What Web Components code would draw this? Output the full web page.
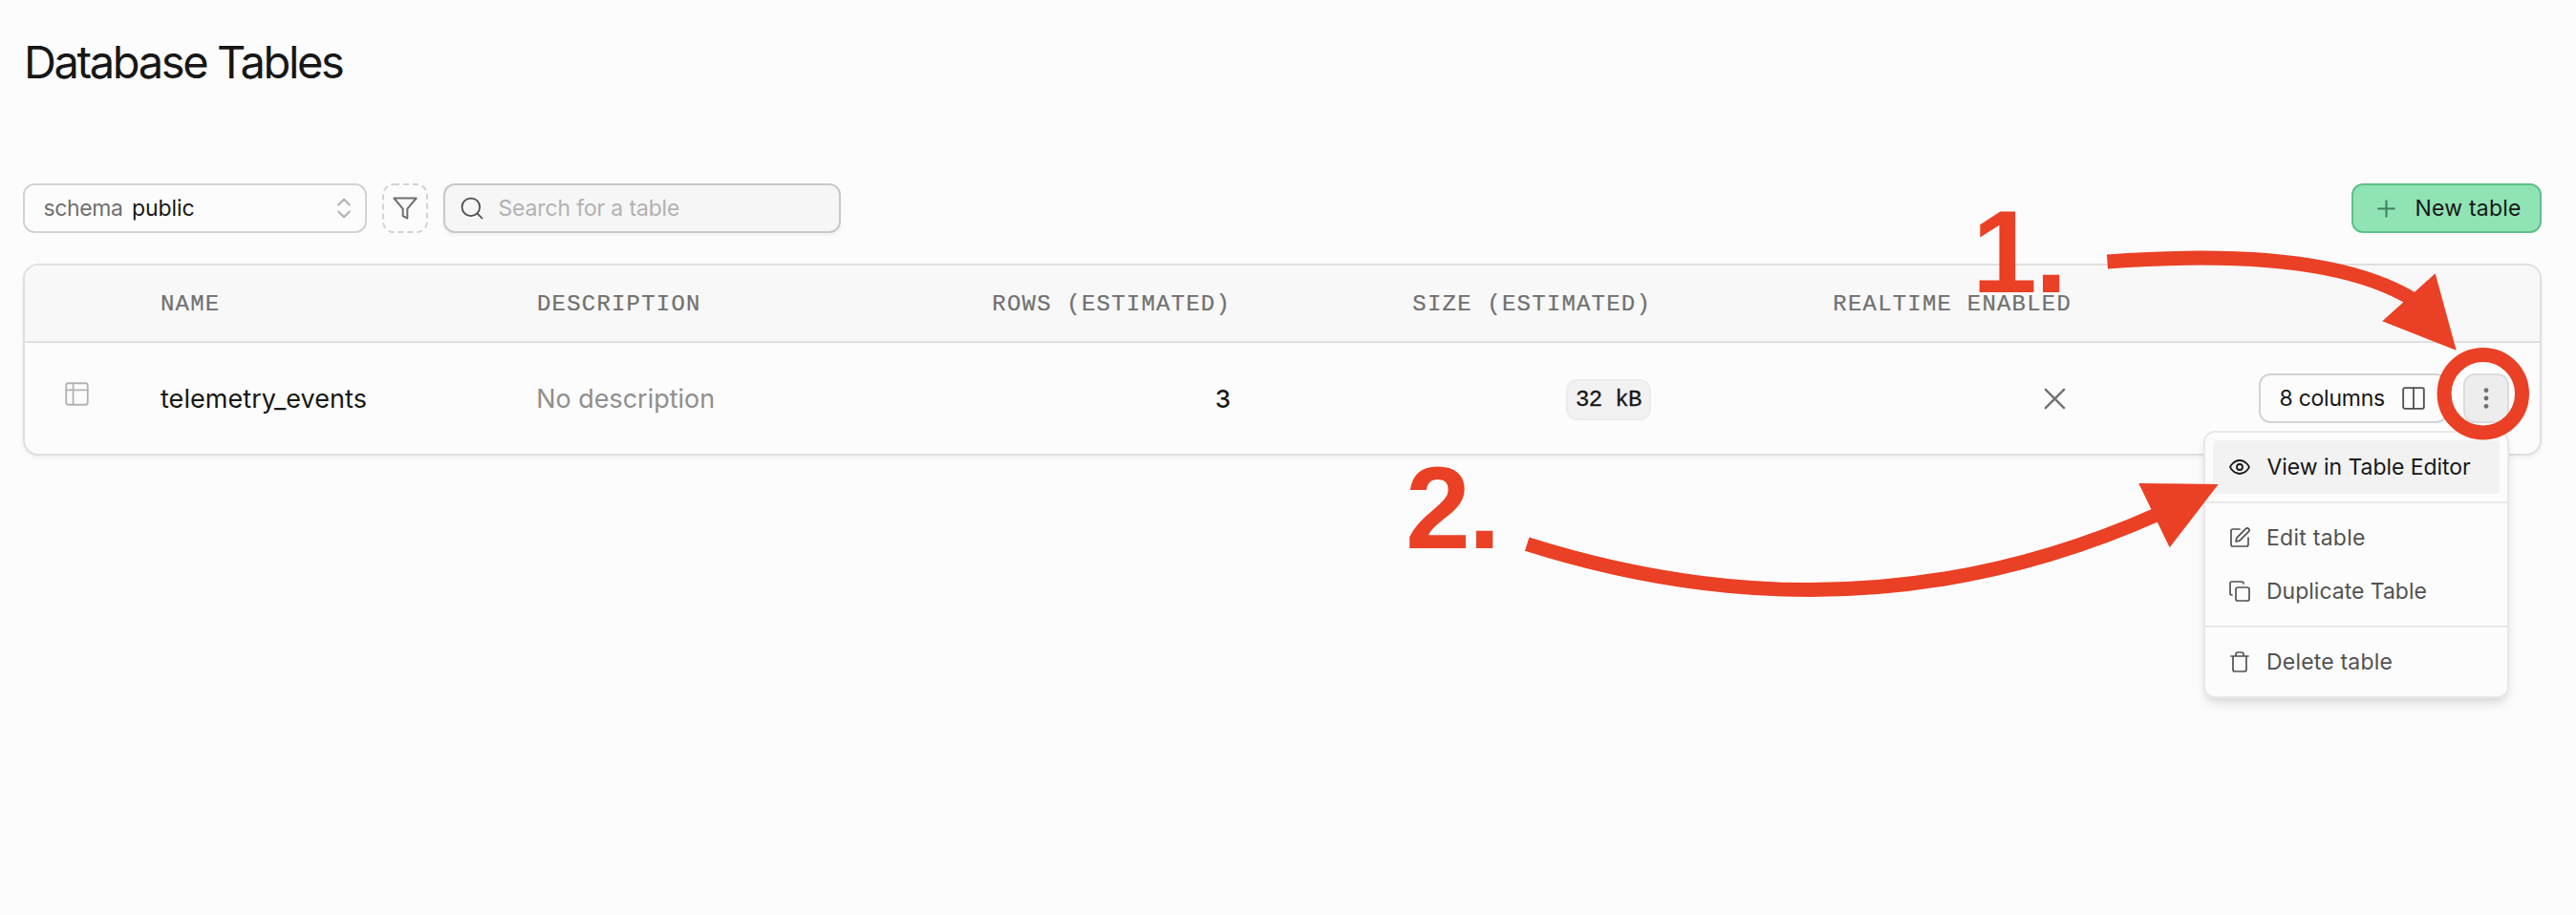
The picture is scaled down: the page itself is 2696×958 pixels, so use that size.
<!DOCTYPE html>
<html lang="en">
<head>
<meta charset="utf-8">
<title>Database Tables</title>
<style>
  body { margin: 0; background: #fcfcfc; }
</style>
</head>
<body>
<tables-page></tables-page>
<script>
const SANS = '"Inter", "Lato", sans-serif';
const MONO = '"Liberation Mono", monospace';
const ICONS = {
  chevrons: '<path d="m7 15 5 5 5-5M7 9l5-5 5 5"/>',
  filter: '<path d="M22 3H2l8 9.46V19l4 2v-8.54L22 3z"/>',
  search: '<circle cx="11" cy="11" r="8"/><path d="m21 21-4.35-4.35"/>',
  plus: '<path d="M4 12h16M12 4v16"/>',
  table: '<rect x="2" y="2" width="20" height="20" rx="2"/><path d="M8.5 2v20M2 8.4h20"/>',
  columns: '<rect x="2" y="2" width="20" height="20" rx="1.6"/><path d="M12 2v20"/>',
  x: '<path d="M4 4l16 16M20 4L4 20"/>',
  dots: '<g fill="currentColor" stroke="none"><circle cx="12" cy="3.7" r="2.4"/><circle cx="12" cy="12" r="2.4"/><circle cx="12" cy="20.3" r="2.4"/></g>',
  eye: '<path d="M2 12s3.2-7 10-7 10 7 10 7-3.2 7-10 7S2 12 2 12z"/><circle cx="12" cy="12" r="3"/>',
  edit: '<path d="M12 3H5a2 2 0 0 0-2 2v14a2 2 0 0 0 2 2h14a2 2 0 0 0 2-2v-7"/><path d="M18.375 2.625a1 1 0 0 1 3 3l-9.013 9.014a2 2 0 0 1-.853.505l-2.873.84a.5.5 0 0 1-.62-.62l.84-2.873a2 2 0 0 1 .506-.852z"/>',
  copy: '<rect x="8" y="8" width="14" height="14" rx="2"/><path d="M4 16c-1.1 0-2-.9-2-2V4c0-1.1.9-2 2-2h10c1.1 0 2 .9 2 2"/>',
  trash: '<path d="M3 6h18M19 6v14a2 2 0 0 1-2 2H7a2 2 0 0 1-2-2V6M8 6V4a2 2 0 0 1 2-2h4a2 2 0 0 1 2 2v2"/>'
};

function define(name, html, setup) {
  const t = document.createElement('template');
  t.innerHTML = html;
  customElements.define(name, class extends HTMLElement {
    connectedCallback() {
      if (this.shadowRoot) return;
      this.attachShadow({ mode: 'open' }).append(t.content.cloneNode(true));
      if (setup) setup(this, this.shadowRoot);
    }
  });
}

define('ui-icon', `<style>
  :host { display: block; flex: none; }
  svg { display: block; fill: none; stroke: currentColor; stroke-linecap: round; stroke-linejoin: round; }
</style><svg viewBox="0 0 24 24" overflow="visible"></svg>`, (el, root) => {
  const svg = root.querySelector('svg');
  const size = el.getAttribute('size') || 24;
  svg.setAttribute('width', size);
  svg.setAttribute('height', size);
  svg.setAttribute('stroke-width', el.getAttribute('stroke') || 1.5);
  svg.innerHTML = ICONS[el.getAttribute('name')];
});

/* A label whose tracking is set so its ink is as wide as the "ink" attribute. */
define('ui-label', `<style>
  :host { display: block; white-space: pre; flex: none; padding-top: 2px; }
</style><slot></slot>`, (el) => {
  const size = +el.getAttribute('size') || 23;
  const weight = el.getAttribute('weight') || 400;
  const text = el.textContent;
  el.style.font = `${weight} ${size}px/1.2 ${SANS}`;
  const ink = +el.getAttribute('ink');
  const ctx = document.createElement('canvas').getContext('2d');
  ctx.font = `${weight} ${size}px ${SANS}`;
  const m = ctx.measureText(text);
  el.style.marginLeft = m.actualBoundingBoxLeft + 'px';
  if (ink && text.length > 1) {
    const gap = (ink - m.actualBoundingBoxRight - m.actualBoundingBoxLeft) / (text.length - 1);
    el.style.letterSpacing = gap.toFixed(3) + 'px';
    el.style.marginRight = (-gap).toFixed(3) + 'px';
  }
});

define('schema-select', `<style>
  :host { display: flex; box-sizing: border-box; width: 360px; height: 52px; align-items: center;
    border: 2px solid #d3d3d3; border-radius: 12px; padding: 0 8px 0 20.5px; }
  .key { color: #707070; } .val { color: #171717; margin-left: 10px; }
  ui-icon { margin-left: auto; color: #b2b2b2; }
</style><ui-label class="key" ink="81.5">schema</ui-label><span class="val"><ui-label ink="64.5">public</ui-label></span>
<ui-icon name="chevrons" size="28" stroke="1.8"></ui-icon>`);

define('filter-button', `<style>
  :host { display: flex; width: 48px; height: 52px; align-items: center; justify-content: center; color: #707070; }
  svg { grid-area: 1/1; } div { display: grid; place-items: center; }
</style><div><svg width="48" height="52" fill="none"><rect x="1" y="1" width="46" height="50" rx="11" stroke="#d3d3d3" stroke-width="2" stroke-dasharray="6 4"/></svg>
<ui-icon name="filter" size="28" stroke="1.7" style="grid-area:1/1"></ui-icon></div>`);

define('search-box', `<style>
  :host { display: flex; box-sizing: border-box; width: 416px; height: 52px; align-items: center; gap: 14.5px;
    background: #f6f6f6; border: 2px solid #c8c8c8; border-radius: 12px; padding-left: 14px;
    box-shadow: 0 2px 4px rgba(0,0,0,.05); color: #4c4c4c; }
  ui-label { color: #b2b2b2; }
</style><ui-icon name="search" size="28"></ui-icon><ui-label ink="188.5">Search for a table</ui-label>`);

define('new-button', `<style>
  :host { display: flex; box-sizing: border-box; width: 199px; height: 52px; align-items: center;
    background: #90e3b4; border: 2px solid #5fc088; border-radius: 12px; padding-left: 21.5px; gap: 20px; color: #171717; }
  ui-icon { color: #3f7f5c; }
</style><ui-icon name="plus" size="25" stroke="1.9"></ui-icon><ui-label ink="108.5">New table</ui-label>`);

define('tool-bar', `<style>
  :host { display: flex; gap: 16px; height: 52px; }
  new-button { margin-left: auto; }
</style><schema-select></schema-select><filter-button></filter-button><search-box></search-box><new-button></new-button>`);

define('size-badge', `<style>
  :host { display: flex; box-sizing: border-box; width: 89px; height: 43px; margin-top: 3px; align-items: center; justify-content: center;
    background: #f2f2f2; border: 2px solid #ececec; border-radius: 12px; color: #171717; padding-top: 1px;
    font: 400 24px/38px ${MONO}; letter-spacing: -.65px; white-space: pre; -webkit-text-stroke: .3px; }
</style><slot></slot>`);

define('columns-button', `<style>
  :host { display: flex; box-sizing: border-box; width: 198px; height: 52px; align-items: center; justify-content: space-between;
    border: 2px solid #d3d3d3; border-radius: 12px; padding: 0 21.3px 0 20.5px; color: #171717; }
  ui-icon { color: #525252; }
</style><ui-label ink="108.5">8 columns</ui-label><ui-icon name="columns" size="26" stroke="1.7"></ui-icon>`);

define('more-button', `<style>
  :host { display: flex; box-sizing: border-box; width: 48px; height: 52px; align-items: center; justify-content: center;
    background: #ededed; border: 2px solid #dcdcdc; border-radius: 12px; color: #707070; }
</style><ui-icon name="dots" size="24"></ui-icon>`);

define('tables-grid', `<style>
  :host { display: block; box-sizing: border-box; height: 201px; border: 2px solid #dfdfdf; border-radius: 16px;
    box-shadow: 0 2px 4px rgba(0,0,0,.06); overflow: hidden; background: #fcfcfc; }
  .row { display: grid; grid-template-columns: 142px 394px 286px 440px 440px 440px 1fr; align-items: center; height: 116px; }
  .head { box-sizing: border-box; height: 81px; padding-top: 2px; background: #f8f8f8; border-bottom: 2px solid #dfdfdf; color: #707070;
    font: 400 24px/30px ${MONO}; letter-spacing: 1.2px; white-space: pre; -webkit-text-stroke: .2px; }
  .r { justify-self: end; }
</style>
<div class="row head"><span></span><span>NAME</span><span>DESCRIPTION</span><span class="r">ROWS (ESTIMATED)</span><span class="r">SIZE (ESTIMATED)</span><span class="r">REALTIME ENABLED</span></div>
<div class="row">
  <ui-icon name="table" size="27" stroke="1.6" style="margin:0 0 10px 41.3px;color:#b2b2b2"></ui-icon>
  <ui-label size="27" ink="214.7" style="color:#171717">telemetry_events</ui-label>
  <div style="padding-left:1.2px"><ui-label size="27" ink="183" style="color:#8f8f8f">No description</ui-label></div>
  <ui-label class="r" size="26" weight="500" style="color:#171717">3</ui-label>
  <size-badge class="r">32 kB</size-badge>
  <ui-icon class="r" name="x" size="29" stroke="1.9" style="padding-right:3.5px;color:#707070"></ui-icon>
  <div class="r" style="display:flex;gap:16px;margin-right:32px"><columns-button></columns-button><more-button></more-button></div>
</div>`);

define('row-menu', `<style>
  :host { display: block; box-sizing: border-box; width: 320px; padding: 8px 0; background: #fcfcfc;
    border: 2px solid #e8e8e8; border-radius: 12px;
    box-shadow: 0 8px 12px -2px rgba(0,0,0,.1), 0 4px 8px -4px rgba(0,0,0,.1); }
  .item { display: flex; height: 56px; margin: 0 8px; padding-left: 16px; align-items: center; gap: 18px; color: #525252; }
  .active { background: #f2f2f2; border-radius: 4px; color: #171717; gap: 16.5px; }
  hr { height: 2px; margin: 8px 0; border: 0; background: #e8e8e8; }
</style>
<div class="item active"><ui-icon name="eye" stroke="1.8"></ui-icon><ui-label ink="213.5">View in Table Editor</ui-label></div>
<hr>
<div class="item"><ui-icon name="edit" stroke="1.7"></ui-icon><ui-label ink="101">Edit table</ui-label></div>
<div class="item"><ui-icon name="copy" stroke="1.7"></ui-icon><ui-label ink="165.5">Duplicate Table</ui-label></div>
<hr>
<div class="item"><ui-icon name="trash" stroke="1.7"></ui-icon><ui-label ink="129.5">Delete table</ui-label></div>`);

define('page-notes', `<style>
  :host { display: block; } svg { display: block; }
  text { font: 700 122px "Liberation Sans", Arial, sans-serif; }
</style><svg width="2696" height="958" fill="#ea4025">
  <g fill="none" stroke="#ea4025" stroke-width="15">
    <path d="M2205.5 274Q2433.5 256.9 2526 314"/>
    <path d="M1598.2 569.7Q1943 679 2258 538.5"/>
    <circle cx="2598.8" cy="412.2" r="40.7"/>
  </g>
  <path d="M2548.7 286.3L2493.3 336.3L2570.7 366.7Z"/>
  <path d="M2238.3 506L2270.7 573.3L2321.7 507Z"/>
  <text x="2064" y="306" letter-spacing="-2">1.</text>
  <text x="1471" y="573.7" letter-spacing="-2">2.</text>
</svg>`);

define('tables-page', `<style>
  :host { display: block; position: relative; box-sizing: border-box; height: 958px; padding: 35px 36px 0 24px; overflow: hidden; background: #fcfcfc; }
  h1 { margin: 0; height: 157px; padding-left: 5px; color: #171717; font-weight: 400; display: flex; align-items: flex-start; }
  tables-grid { margin-top: 32px; }
  row-menu { position: absolute; left: 2306px; top: 451px; }
  page-notes { position: absolute; left: 0; top: 0; }
</style>
<h1><ui-label size="47" ink="330">Database Tables</ui-label></h1>
<tool-bar></tool-bar>
<tables-grid></tables-grid>
<row-menu></row-menu>
<page-notes></page-notes>`);
</script>
</body>
</html>
